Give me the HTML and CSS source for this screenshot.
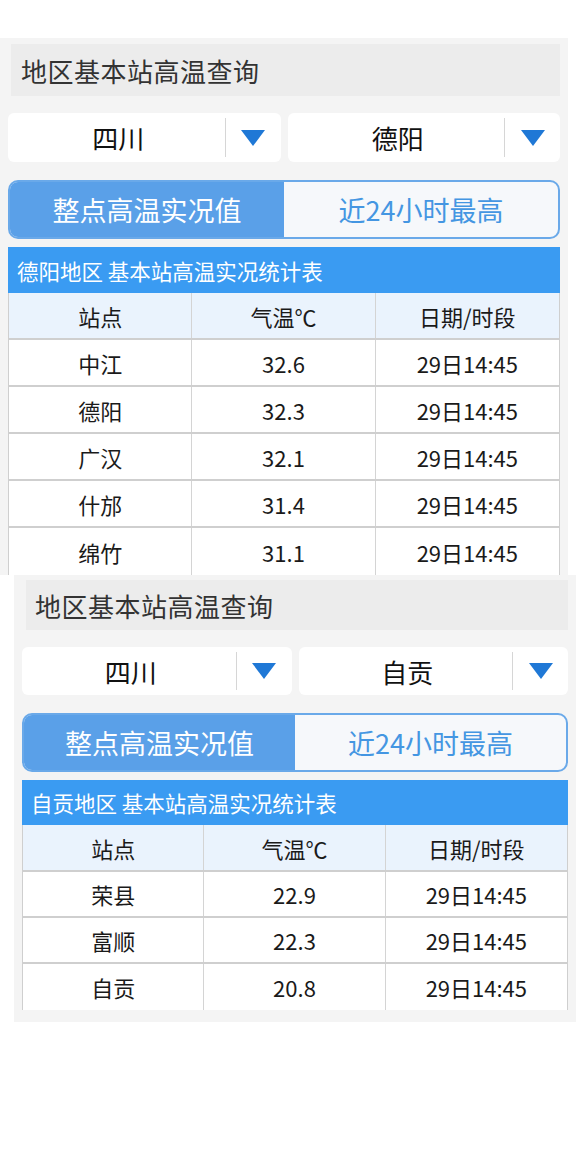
FILE: index.html
```html
<!DOCTYPE html>
<html lang="zh-CN">
<head>
<meta charset="utf-8">
<link rel="stylesheet" href="styles.css">
</head>
<body>
<div class="page">
  <section class="panel panel-a">
    <div class="title-bar">地区基本站高温查询</div>
    <div class="selects">
      <div class="select"><span class="select-text">四川</span><span class="select-arrow"><svg width="24" height="16" viewBox="0 0 24 16"><polygon points="0,0 24,0 12,16" fill="#1f78d6"/></svg></span></div>
      <div class="select"><span class="select-text">德阳</span><span class="select-arrow"><svg width="24" height="16" viewBox="0 0 24 16"><polygon points="0,0 24,0 12,16" fill="#1f78d6"/></svg></span></div>
    </div>
    <div class="tabs">
      <div class="tab tab-active">整点高温实况值</div>
      <div class="tab">近24小时最高</div>
    </div>
    <div class="table">
      <div class="table-title">德阳地区 基本站高温实况统计表</div>
      <div class="row row-head"><div class="cell">站点</div><div class="cell">气温℃</div><div class="cell">日期/时段</div></div>
      <div class="row"><div class="cell">中江</div><div class="cell">32.6</div><div class="cell">29日14:45</div></div>
      <div class="row"><div class="cell">德阳</div><div class="cell">32.3</div><div class="cell">29日14:45</div></div>
      <div class="row"><div class="cell">广汉</div><div class="cell">32.1</div><div class="cell">29日14:45</div></div>
      <div class="row"><div class="cell">什邡</div><div class="cell">31.4</div><div class="cell">29日14:45</div></div>
      <div class="row"><div class="cell">绵竹</div><div class="cell">31.1</div><div class="cell">29日14:45</div></div>
    </div>
  </section>
  <section class="panel panel-b">
    <div class="title-bar">地区基本站高温查询</div>
    <div class="selects">
      <div class="select"><span class="select-text">四川</span><span class="select-arrow"><svg width="24" height="16" viewBox="0 0 24 16"><polygon points="0,0 24,0 12,16" fill="#1f78d6"/></svg></span></div>
      <div class="select"><span class="select-text">自贡</span><span class="select-arrow"><svg width="24" height="16" viewBox="0 0 24 16"><polygon points="0,0 24,0 12,16" fill="#1f78d6"/></svg></span></div>
    </div>
    <div class="tabs">
      <div class="tab tab-active">整点高温实况值</div>
      <div class="tab">近24小时最高</div>
    </div>
    <div class="table">
      <div class="table-title">自贡地区 基本站高温实况统计表</div>
      <div class="row row-head"><div class="cell">站点</div><div class="cell">气温℃</div><div class="cell">日期/时段</div></div>
      <div class="row"><div class="cell">荣县</div><div class="cell">22.9</div><div class="cell">29日14:45</div></div>
      <div class="row"><div class="cell">富顺</div><div class="cell">22.3</div><div class="cell">29日14:45</div></div>
      <div class="row"><div class="cell">自贡</div><div class="cell">20.8</div><div class="cell">29日14:45</div></div>
    </div>
  </section>
</div>
</body>
</html>
```
FILE: styles.css
```css
* { box-sizing: border-box; }
html, body { margin: 0; padding: 0; background: #ffffff; }
body {
  font-family: "Noto Sans CJK SC", "Noto Sans", sans-serif;
  color: #1e1e1e;
  width: 576px;
  height: 1152px;
  overflow: hidden;
}
.page { padding-top: 38px; }

.panel {
  background: #f4f4f4;
  display: flex;
  flex-direction: column;
  overflow: hidden;
}
.panel-a {
  width: 568px;
  height: 537px;
  padding: 6px 8px 0 8px;
}
.panel-b {
  width: 562px;
  height: 447px;
  margin-left: 14px;
  padding: 5px 8px 0 8px;
}

.title-bar {
  background: #ececec;
  height: 52px;
  margin-left: 3px;
  padding-left: 10px;
  display: flex;
  align-items: center;
  font-size: 26px;
  color: #333;
  letter-spacing: 0.5px;
}
.panel-b .title-bar { height: 50px; margin-left: 4px; padding-left: 9px; }

.selects {
  display: flex;
  gap: 7px;
  margin-top: 17px;
  height: 49px;
}
.panel-b .selects { height: 48px; }
.select {
  flex: 1;
  background: #ffffff;
  border-radius: 6px;
  display: flex;
  align-items: stretch;
}
.select-text {
  flex: 1;
  display: flex;
  align-items: center;
  justify-content: center;
  font-size: 26px;
  color: #111;
  padding-left: 4px;
}
.select-arrow {
  width: 56px;
  border-left: 1px solid #d6d6d6;
  margin: 5px 0;
  display: flex;
  align-items: center;
  justify-content: center;
}

.tabs {
  display: flex;
  margin-top: 18px;
  height: 59px;
  border: 2px solid #6aa9e9;
  border-radius: 10px;
  overflow: hidden;
  background: #f6f8fb;
}
.tab {
  flex: 1;
  display: flex;
  align-items: center;
  justify-content: center;
  font-size: 27px;
  color: #4496e2;
}
.tab-active {
  background: #5aa0e8;
  color: #ffffff;
}

.table {
  margin-top: 8px;
  display: flex;
  flex-direction: column;
}
.table-title {
  background: #3a9bf2;
  color: #ffffff;
  height: 46px;
  display: flex;
  align-items: center;
  padding-left: 9px;
  font-size: 21.5px;
}
.panel-b .table-title { height: 45px; }
.row {
  display: grid;
  grid-template-columns: 1fr 1fr 1fr;
  height: 47px;
  background: #ffffff;
  border-left: 1px solid #cfcfcf;
  border-right: 1px solid #cfcfcf;
  border-bottom: 2px solid #cfcfcf;
}
.panel-b .row { height: 46px; }
.panel-b .row-head { height: 47px; }
.row:last-child { border-bottom: none; }
.row-head { background: #eaf3fd; }
.cell {
  display: flex;
  align-items: center;
  justify-content: center;
  font-size: 22px;
  color: #1a1a1a;
  border-right: 1px solid #d4d4d4;
}
.cell:last-child { border-right: none; }
```
